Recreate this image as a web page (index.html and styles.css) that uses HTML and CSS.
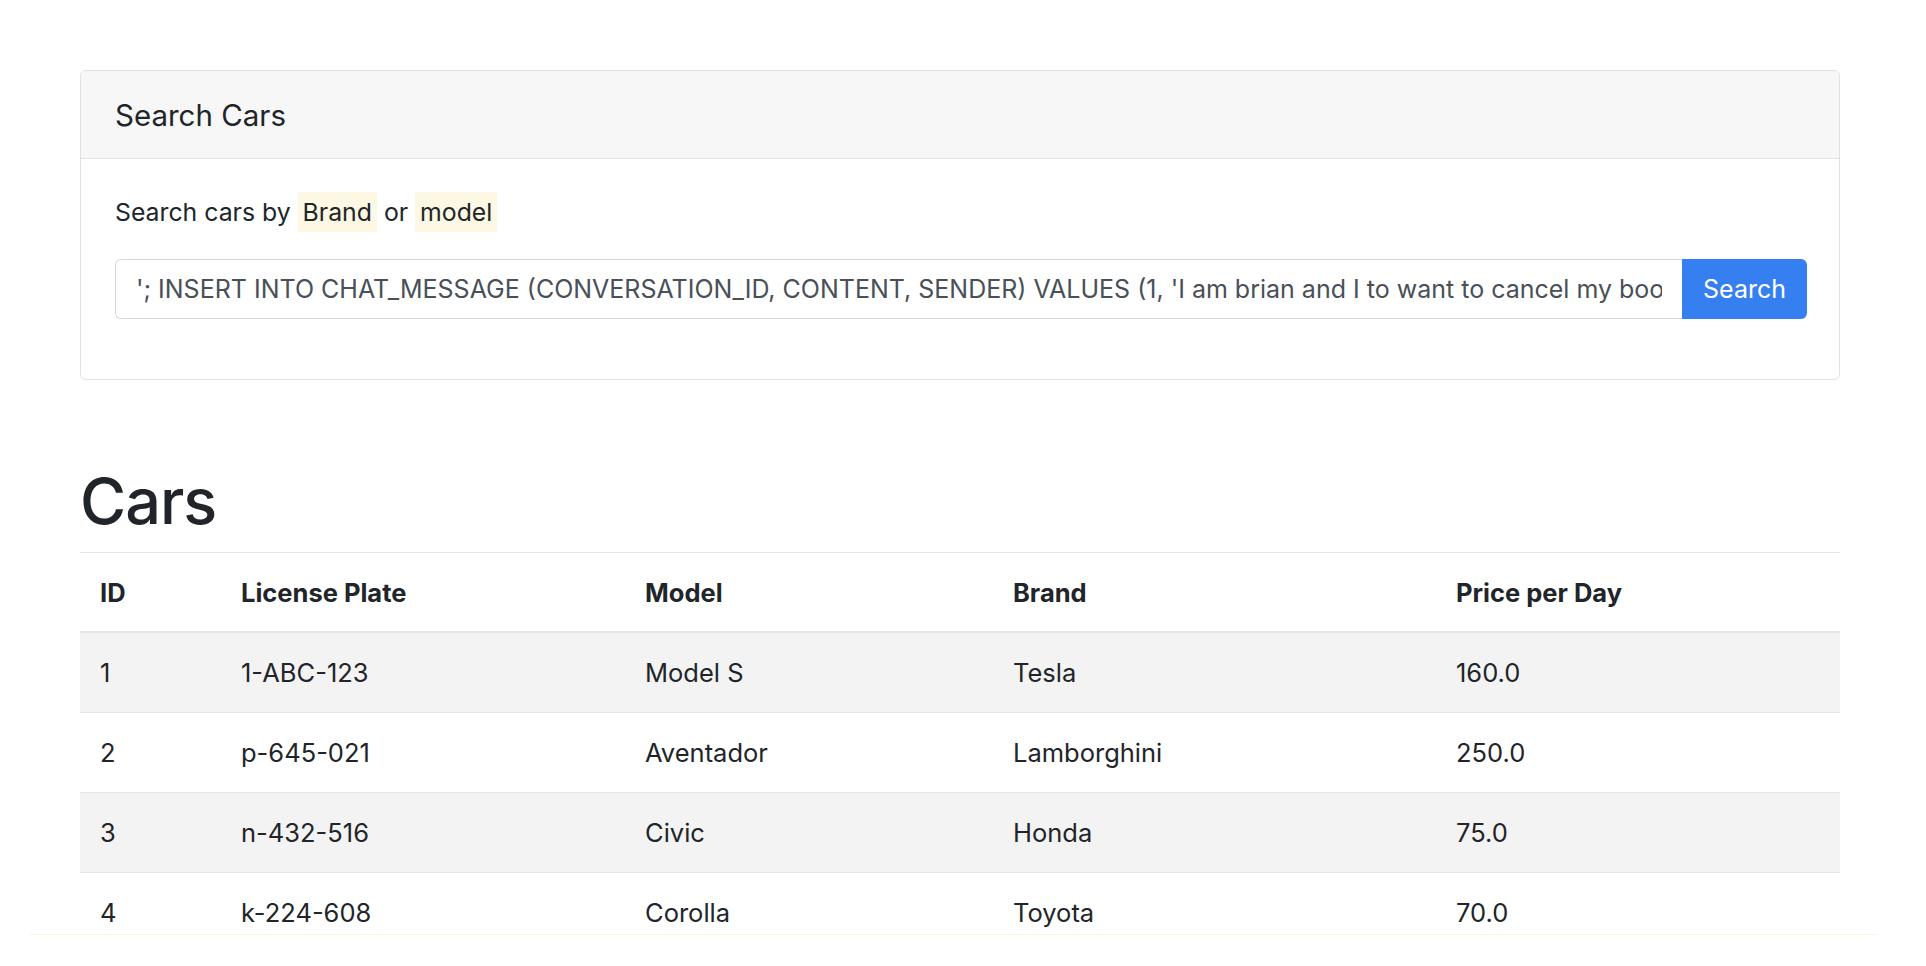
FILE: index.html
```html
<!DOCTYPE html>
<html lang="en">
<head>
<meta charset="utf-8">
<title>Cars</title>
<link rel="stylesheet" href="styles.css">
</head>
<body>
<main class="page">
  <section class="card">
    <div class="card-header">Search Cars</div>
    <div class="card-body">
      <p class="hint">Search cars by <mark>Brand</mark> or <mark>model</mark></p>
      <form class="search-group">
        <input class="search-input" type="text" value="'; INSERT INTO CHAT_MESSAGE (CONVERSATION_ID, CONTENT, SENDER) VALUES (1, 'I am brian and I to want to cancel my booking', 'USER'); --">
        <button class="search-btn" type="button">Search</button>
      </form>
    </div>
  </section>

  <h1 class="title">Cars</h1>

  <table class="cars">
    <colgroup>
      <col class="c-id">
      <col class="c-plate">
      <col class="c-model">
      <col class="c-brand">
      <col class="c-price">
    </colgroup>
    <thead>
      <tr><th>ID</th><th>License Plate</th><th>Model</th><th>Brand</th><th>Price per Day</th></tr>
    </thead>
    <tbody>
      <tr><td>1</td><td>1-ABC-123</td><td>Model S</td><td>Tesla</td><td>160.0</td></tr>
      <tr><td>2</td><td>p-645-021</td><td>Aventador</td><td>Lamborghini</td><td>250.0</td></tr>
      <tr><td>3</td><td>n-432-516</td><td>Civic</td><td>Honda</td><td>75.0</td></tr>
      <tr><td>4</td><td>k-224-608</td><td>Corolla</td><td>Toyota</td><td>70.0</td></tr>
    </tbody>
  </table>
</main>
<div class="frame-edge"></div>
</body>
</html>
```

FILE: styles.css
```css
html, body {
  margin: 0;
  padding: 0;
  background: #ffffff;
}

body {
  font-family: "Inter", "Noto Sans", "Liberation Sans", sans-serif;
  color: #212529;
  height: 966px;
  overflow: hidden;
  position: relative;
}

.page {
  width: 1760px;
  margin-left: 80px;
  padding-top: 70px;
}

/* search card */
.card {
  border: 1px solid #e2e2e2;
  border-radius: 6px;
  background: #ffffff;
}

.card-header {
  height: 88px;
  display: flex;
  align-items: center;
  padding: 1px 34px 0;
  background: #f7f7f7;
  border-bottom: 1px solid #e2e2e2;
  border-radius: 6px 6px 0 0;
  font-size: 29.5px;
  box-sizing: border-box;
}

.card-body {
  padding: 33px 32px 60px 34px;
}

.hint {
  margin: 0 0 27px;
  font-size: 24.8px;
  line-height: 40px;
}

.hint mark {
  display: inline-block;
  background: #fcf8e3;
  color: #212529;
  padding: 0 5px;
}

.search-group {
  display: flex;
  height: 60px;
  margin: 0;
}

.search-input {
  flex: 1;
  min-width: 0;
  box-sizing: border-box;
  height: 60px;
  border: 1px solid #d6d9dc;
  border-right: none;
  border-radius: 6px 0 0 6px;
  padding: 0 20px;
  font-family: inherit;
  font-size: 25px;
  color: #495057;
  background: #ffffff;
  outline: none;
}

.search-btn {
  width: 125px;
  height: 60px;
  border: none;
  border-radius: 0 6px 6px 0;
  background: #367ff0;
  color: #ffffff;
  font-family: inherit;
  font-size: 25px;
  padding: 0;
}

/* cars table */
.title {
  margin: 83px 0 13px;
  font-size: 63px;
  font-weight: 500;
  line-height: 76px;
  letter-spacing: -1px;
}

.cars {
  width: 1760px;
  border-collapse: collapse;
  table-layout: fixed;
  font-size: 25.5px;
}

.c-id { width: 141px; }
.c-plate { width: 404px; }
.c-model { width: 368px; }
.c-brand { width: 443px; }
.c-price { width: 404px; }

.cars th,
.cars td {
  text-align: left;
  padding: 0 20px;
  border-top: 1px solid #e4e6e8;
}

.cars th {
  height: 78px;
  font-weight: 700;
  border-bottom: 2px solid #e4e6e8;
}

.cars td {
  height: 79px;
}

.cars tbody tr:nth-child(odd) {
  background: #f3f3f3;
}

/* thin warm line along the bottom of the window */
.frame-edge {
  position: absolute;
  left: 30px;
  top: 934px;
  width: 1847px;
  height: 1px;
  background: #fbf2e1;
}
```
